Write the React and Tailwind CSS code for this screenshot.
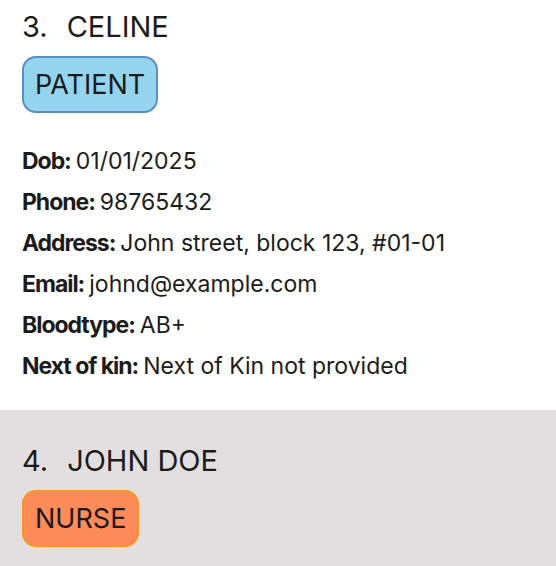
const people = [
  {
    index: 3,
    name: "CELINE",
    role: "PATIENT",
    badge: "bg-[#94d4ef] border-[#5b8fc1]",
    card: "bg-white pt-[7px] pb-[23px]",
    details: [
      ["Dob:", "01/01/2025"],
      ["Phone:", "98765432"],
      ["Address:", "John street, block 123, #01-01"],
      ["Email:", "johnd@example.com"],
      ["Bloodtype:", "AB+"],
      ["Next of kin:", "Next of Kin not provided"],
    ],
  },
  {
    index: 4,
    name: "JOHN DOE",
    role: "NURSE",
    badge: "bg-[#ff8a5a] border-[#f7971f]",
    card: "bg-[#e3dfe0] pt-[31px] pb-[40px]",
    details: [],
  },
];

const Card = ({ person }) => (
  <div className={`px-[22px] ${person.card}`}>
    <div className="flex items-baseline gap-[19px] text-[29px] leading-[40px] text-[#1b1b1b]">
      <span>{person.index}.</span>
      <span>{person.name}</span>
    </div>
    <div className="mt-[9px] flex">
      <span
        className={`rounded-[14px] border-2 px-[11px] pt-[2px] h-[57px] flex items-center text-[27px] text-[#1b1b1b] ${person.badge}`}
      >
        {person.role}
      </span>
    </div>
    {person.details.length > 0 && (
      <div className="mt-[28px] flex flex-col">
        {person.details.map(([label, value]) => (
          <div key={label} className="h-[41px] flex items-center text-[23px] text-[#1b1b1b]">
            <span className="font-bold tracking-[-0.045em] mr-[5px]">{label}</span>
            <span>{value}</span>
          </div>
        ))}
      </div>
    )}
  </div>
);

export default function App() {
  return (
    <div className="w-[556px] h-[566px] overflow-hidden bg-white font-['Inter',sans-serif]">
      {people.map((p) => (
        <Card key={p.index} person={p} />
      ))}
    </div>
  );
}
